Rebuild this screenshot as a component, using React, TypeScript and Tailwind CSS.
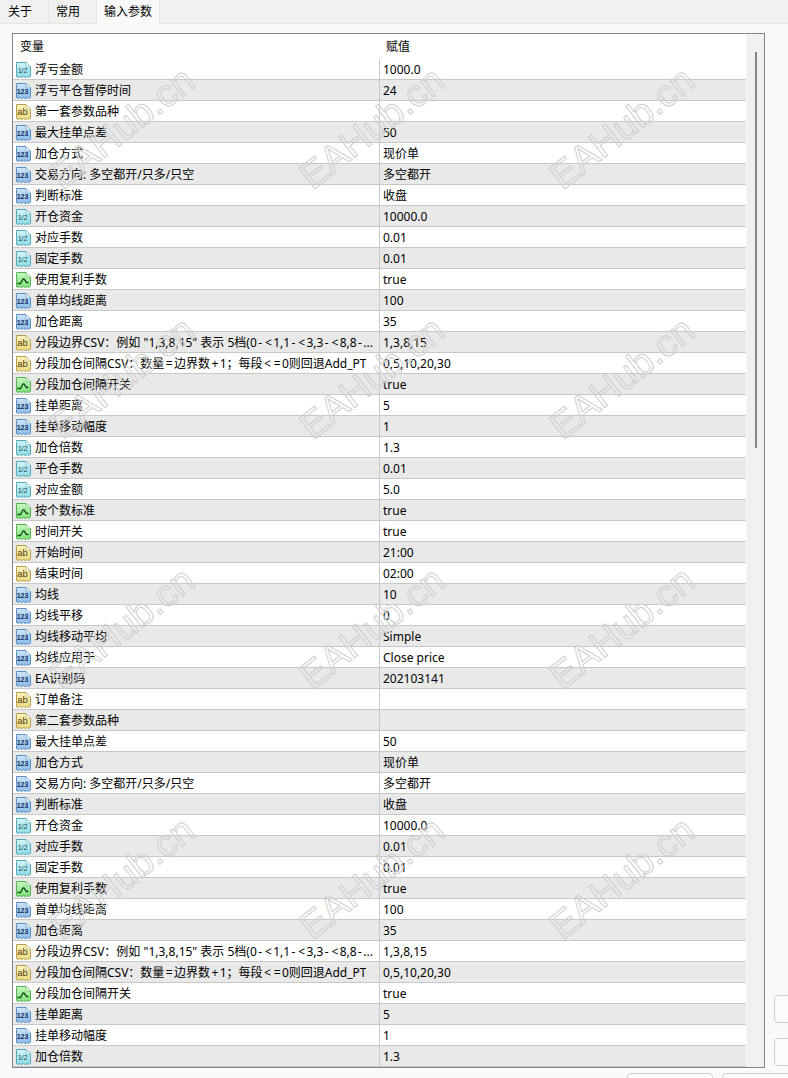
type Kind = "d" | "i" | "s" | "b";

type Row = [Kind, string, string];

const SET: Row[] = [
  ["i", "最大挂单点差", "50"],
  ["i", "加仓方式", "现价单"],
  ["i", "交易方向: 多空都开/只多/只空", "多空都开"],
  ["i", "判断标准", "收盘"],
  ["d", "开仓资金", "10000.0"],
  ["d", "对应手数", "0.01"],
  ["d", "固定手数", "0.01"],
  ["b", "使用复利手数", "true"],
  ["i", "首单均线距离", "100"],
  ["i", "加仓距离", "35"],
  ["s", "分段边界CSV：例如 \"1,3,8,15\" 表示 5档(0-<1,1-<3,3-<8,8-...", "1,3,8,15"],
  ["s", "分段加仓间隔CSV：数量=边界数+1；每段<=0则回退Add_PT", "0,5,10,20,30"],
  ["b", "分段加仓间隔开关", "true"],
  ["i", "挂单距离", "5"],
  ["i", "挂单移动幅度", "1"],
  ["d", "加仓倍数", "1.3"],
];

const ROWS: Row[] = [
  ["d", "浮亏金额", "1000.0"],
  ["i", "浮亏平仓暂停时间", "24"],
  ["s", "第一套参数品种", ""],
  ...SET,
  ["d", "平仓手数", "0.01"],
  ["d", "对应金额", "5.0"],
  ["b", "按个数标准", "true"],
  ["b", "时间开关", "true"],
  ["s", "开始时间", "21:00"],
  ["s", "结束时间", "02:00"],
  ["i", "均线", "10"],
  ["i", "均线平移", "0"],
  ["i", "均线移动平均", "Simple"],
  ["i", "均线应用于", "Close price"],
  ["i", "EA识别码", "202103141"],
  ["s", "订单备注", ""],
  ["s", "第二套参数品种", ""],
  ...SET,
];

const MARK_X = [122, 372, 622];
const MARK_Y = [128, 378, 628, 878];

const ICONS = {
  d: { top: "#d4f4f6", bottom: "#8fdbe4", stroke: "#4fa9b9", text: "#17505e", label: "1/2" },
  i: { top: "#cfe4f8", bottom: "#8dbbe8", stroke: "#5a8fc6", text: "#0f2f5c", label: "123" },
  s: { top: "#fbf2c0", bottom: "#ecd97e", stroke: "#b5a050", text: "#4f420f", label: "ab" },
  b: { top: "#c8f7c2", bottom: "#7fe37a", stroke: "#56b251", text: "#14501a", label: "" },
};

function TypeIcon({ kind }: { kind: Kind }) {
  const c = ICONS[kind];
  return (
    <svg width="16" height="16" viewBox="0 0 16 16" className="shrink-0 translate-y-px">
      <defs>
        <linearGradient id={`icon-${kind}`} x1="0" y1="0" x2="0" y2="1">
          <stop offset="0" stopColor={c.top} />
          <stop offset="1" stopColor={c.bottom} />
        </linearGradient>
      </defs>
      <path
        d="M1.500.5h9.500l4.500 4.500v9l-1.500 1.500-1.500-1-2 1-2-1-2 1-2-1-1.500 1-1.500-1V1.500a1 1 0 0 1 1-1z"
        fill={`url(#icon-${kind})`}
        stroke={c.stroke}
      />
      <path d="M11 .5v4.500h4.500" fill="#fff" fillOpacity="0.6" stroke={c.stroke} strokeOpacity="0.5" />
      {kind === "b" ? (
        <path d="M2.500 11.500h3l2.500-4.500h1l2.500 3.500h2" fill="none" stroke={c.text} strokeWidth="1.300" />
      ) : (
        <text
          x="7.500"
          y={kind === "s" ? 10.500 : 10.800}
          textAnchor="middle"
          fontSize={kind === "s" ? 9.500 : kind === "d" ? 7.500 : 7}
          fontWeight={kind === "i" ? 700 : 400}
          letterSpacing={kind === "d" ? -0.300 : 0}
          fontFamily="'Liberation Sans', sans-serif"
          fill={c.text}
        >
          {c.label}
        </text>
      )}
    </svg>
  );
}

// the symbols sit wider in the reference font than in Noto Sans
function Label({ text }: { text: string }) {
  return (
    <span className="truncate pt-0.5">
      {text.split(/([<=+]|(?<=\d)-)/).map((part, i) =>
        i % 2 === 1 ? (
          <span key={i} className="mx-[1.400px]">
            {part}
          </span>
        ) : (
          part
        ),
      )}
    </span>
  );
}

export default function App() {
  return (
    <div className="relative flex h-[1078px] w-[788px] flex-col overflow-hidden bg-[#f9f9f9] font-['Noto_Sans','Noto_Sans_CJK_SC',sans-serif] text-xs text-black">
      {/* tabs */}
      <div className="flex h-[24px] shrink-0 items-end border-b border-[#e5e5e5] bg-[#f0f0f0]">
        <div className="flex h-[23px] w-[49px] items-center border-r border-[#e5e5e5] pl-2">关于</div>
        <div className="flex h-[23px] w-[48px] items-center border-r border-[#e5e5e5] pl-[7px]">常用</div>
        <div className="-mb-px flex h-[24px] w-[63px] items-center border-r border-[#e5e5e5] bg-[#f9f9f9] pl-[7px]">输入参数</div>
      </div>

      <div className="flex min-h-0 flex-1 pt-[9px] pl-3">
        <div className="flex h-[1035px] w-[753px] shrink-0 border border-[#7f858f] bg-white">
          <div className="min-w-0 flex-1 overflow-hidden">
            <div className="flex h-[25px] items-center">
              <div className="w-[366px] pl-[7px]">变量</div>
              <div className="pl-[7px]">赋值</div>
            </div>
            {ROWS.map((row, i) => (
              <div
                key={i}
                className={`flex h-[21px] items-center border-b border-[#c8c8c8] ${i % 2 === 1 ? "bg-[#e9e9e9]" : "bg-white"}`}
              >
                <div className="flex w-[367px] shrink-0 items-center gap-1 self-stretch border-r border-[#c8c8c8] pl-[2px]">
                  <TypeIcon kind={row[0]} />
                  <Label text={row[1]} />
                </div>
                <div className="pt-0.5 pl-[3px]">{row[2]}</div>
              </div>
            ))}
          </div>
          {/* scrollbar */}
          <div className="flex w-[18px] shrink-0 justify-center border-l border-[#f6f6f6] bg-[#f0f0f0] pt-[18px]">
            <div className="h-[396px] w-[2px] bg-[#858585]" />
          </div>
        </div>

        {/* side buttons, cut off by the window */}
        <div className="flex flex-col gap-[15px] pt-[962px] pl-[9px]">
          <div className="h-[28px] w-[20px] rounded border border-[#d0d0d0] bg-[#fbfbfb]" />
          <div className="h-[28px] w-[20px] rounded border border-[#d0d0d0] bg-[#fbfbfb]" />
        </div>
      </div>

      {/* bottom buttons, cut off by the window */}
      <div className="absolute top-[1073px] left-[627px] h-[20px] w-[86px] rounded border border-[#d0d0d0] bg-[#fbfbfb]" />
      <div className="absolute top-[1073px] left-[722px] h-[20px] w-[86px] rounded border border-[#d0d0d0] bg-[#fbfbfb]" />

      {/* watermark */}
      {MARK_Y.flatMap((y) =>
        MARK_X.map((x) => (
          <div
            key={`${x}-${y}`}
            style={{ left: x, top: y }}
            className="pointer-events-none absolute -translate-x-1/2 -translate-y-1/2 rotate-[-38deg] font-['Liberation_Sans',sans-serif] text-[38px] whitespace-nowrap text-transparent [-webkit-text-stroke:1px_#cfcfcf]"
          >
            EAHub.cn
          </div>
        )),
      )}
    </div>
  );
}
